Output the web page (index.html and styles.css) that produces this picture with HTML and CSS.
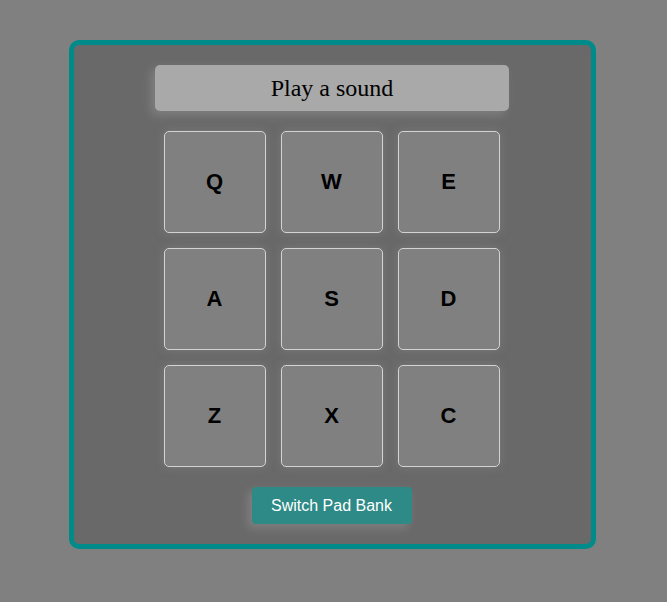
FILE: index.html
```html
<!DOCTYPE html>
<html>
<head>
<meta charset="utf-8">
<link rel="stylesheet" href="styles.css">
</head>
<body>
<div class="machine">
  <div class="display">Play a sound</div>
  <div class="pads">
    <button class="pad">Q</button>
    <button class="pad">W</button>
    <button class="pad">E</button>
    <button class="pad">A</button>
    <button class="pad">S</button>
    <button class="pad">D</button>
    <button class="pad">Z</button>
    <button class="pad">X</button>
    <button class="pad">C</button>
  </div>
  <button class="switch">Switch Pad Bank</button>
</div>
</body>
</html>
```
FILE: styles.css
```css
html, body {
  margin: 0;
  padding: 0;
  background: #808080;
  height: 100%;
}
body {
  padding-top: 40px;
  box-sizing: border-box;
}
.machine {
  box-sizing: border-box;
  width: 527px;
  height: 509px;
  margin-left: 69px;
  border: 5px solid #008b8b;
  border-radius: 10px;
  background: #696969;
  padding-top: 20px;
  display: flex;
  flex-direction: column;
  align-items: center;
}
.display {
  width: 354px;
  height: 46px;
  margin-left: -1px;
  background: #a9a9a9;
  border-radius: 5px;
  box-shadow: -4px 4px 10px #808080;
  font-family: "Liberation Serif", serif;
  font-size: 24px;
  color: #000;
  display: flex;
  align-items: center;
  justify-content: center;
}
.pads {
  margin-top: 20px;
  margin-left: -2px;
  display: grid;
  grid-template-columns: repeat(3, 102px);
  grid-auto-rows: 102px;
  gap: 15px;
}
.pad {
  box-sizing: border-box;
  width: 102px;
  height: 102px;
  background: #808080;
  border: 1px solid #d3d3d3;
  border-radius: 5px;
  box-shadow: 0 0 10px #7a7a7a;
  font-family: "Liberation Sans", Arial, sans-serif;
  font-weight: bold;
  font-size: 22px;
  color: #000;
  padding: 0;
  display: flex;
  align-items: center;
  justify-content: center;
}
.switch {
  margin-top: 20px;
  width: 160px;
  height: 37px;
  margin-left: -2px;
  background: #2e8a87;
  border: none;
  border-radius: 4px;
  box-shadow: -4px 4px 10px #808080;
  color: #fff;
  font-family: "Liberation Sans", Arial, sans-serif;
  font-size: 16px;
  padding: 0;
}
```
